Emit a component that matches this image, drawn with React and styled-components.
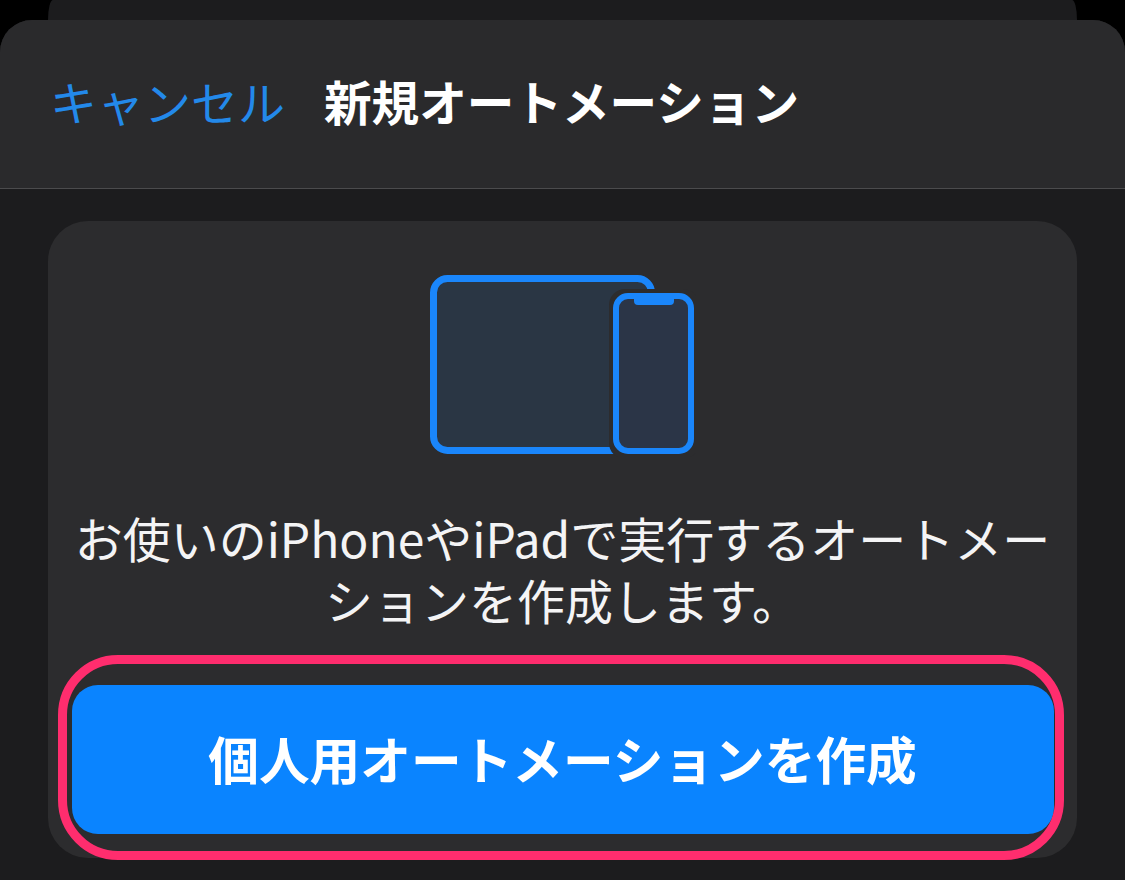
import React from "react";
import styled, { createGlobalStyle } from "styled-components";

const Global = createGlobalStyle`
  html, body { margin: 0; padding: 0; background: #000; }
  body { font-family: "Noto Sans CJK JP", "Liberation Sans", sans-serif; }
`;

const Page = styled.div`
  width: 1125px;
  height: 880px;
  overflow: hidden;
  background: #000;
  display: flex;
  flex-direction: column;
`;

const BackSheet = styled.div`
  flex: 0 0 20px;
  margin: 0 48px;
  background: #1c1c1e;
  border-radius: 5px 5px 0 0 / 20px 20px 0 0;
`;

const Sheet = styled.div`
  flex: 1;
  background: #1c1c1e;
  border-radius: 32px 32px 0 0;
  overflow: hidden;
`;

const Header = styled.header`
  height: 169px;
  box-sizing: border-box;
  border-bottom: 1px solid #4b4b4d;
  background: #2a2a2c;
  display: flex;
  align-items: center;
  padding: 0 0 7px 50px;
  gap: 39px;
`;

const Cancel = styled.span`
  font-size: 47px;
  line-height: 1;
  font-weight: 400;
  color: #2389ea;
`;

const Title = styled.h1`
  margin: 0;
  font-size: 47.6px;
  line-height: 1;
  font-weight: 700;
  color: #fff;
`;

const Card = styled.section`
  position: relative;
  margin: 32px 48px 0;
  height: 637px;
  box-sizing: border-box;
  background: #2c2c2e;
  border-radius: 40px;
  padding: 54px 0 24px;
  display: flex;
  flex-direction: column;
  align-items: center;
`;

const Illustration = styled.svg`
  display: block;
  width: 266px;
  height: 182px;
  flex: none;
`;

const Description = styled.p`
  margin: 49px 0 0;
  width: 1010px;
  text-align: center;
  font-size: 48px;
  line-height: 62px;
  font-weight: 400;
  color: #f4f4f5;
`;

const PrimaryButton = styled.button`
  margin-top: 55px;
  width: 982px;
  height: 149px;
  flex: none;
  border: 0;
  border-radius: 26px;
  background: #0a84ff;
  color: #fff;
  font-family: inherit;
  font-size: 50.7px;
  font-weight: 700;
  padding: 0 0 3px;
`;

const Highlight = styled.div`
  position: absolute;
  left: 10px;
  top: 434px;
  width: 1006px;
  height: 205px;
  box-sizing: border-box;
  border: 9px solid #ff2d6e;
  border-radius: 60px;
  pointer-events: none;
`;

const DevicesIcon = () => (
  <Illustration viewBox="0 0 266 182" aria-hidden="true">
    <rect x="3.5" y="3.5" width="218" height="172" rx="14" fill="#2a3644" stroke="#1a86fb" strokeWidth="7" />
    <rect x="179" y="14" width="90" height="170" rx="16" fill="#2c2c2e" />
    <rect x="186" y="21" width="75" height="155" rx="12" fill="#2b3547" stroke="#1a86fb" strokeWidth="6" />
    <path d="M204 21h40v5a4 4 0 0 1-4 4h-32a4 4 0 0 1-4-4z" fill="#1a86fb" />
  </Illustration>
);

export default function App() {
  return (
    <Page>
      <Global />
      <BackSheet />
      <Sheet>
        <Header>
          <Cancel>キャンセル</Cancel>
          <Title>新規オートメーション</Title>
        </Header>
        <Card>
          <DevicesIcon />
          <Description>お使いのiPhoneやiPadで実行するオートメーションを作成します。</Description>
          <PrimaryButton>個人用オートメーションを作成</PrimaryButton>
          <Highlight />
        </Card>
      </Sheet>
    </Page>
  );
}
